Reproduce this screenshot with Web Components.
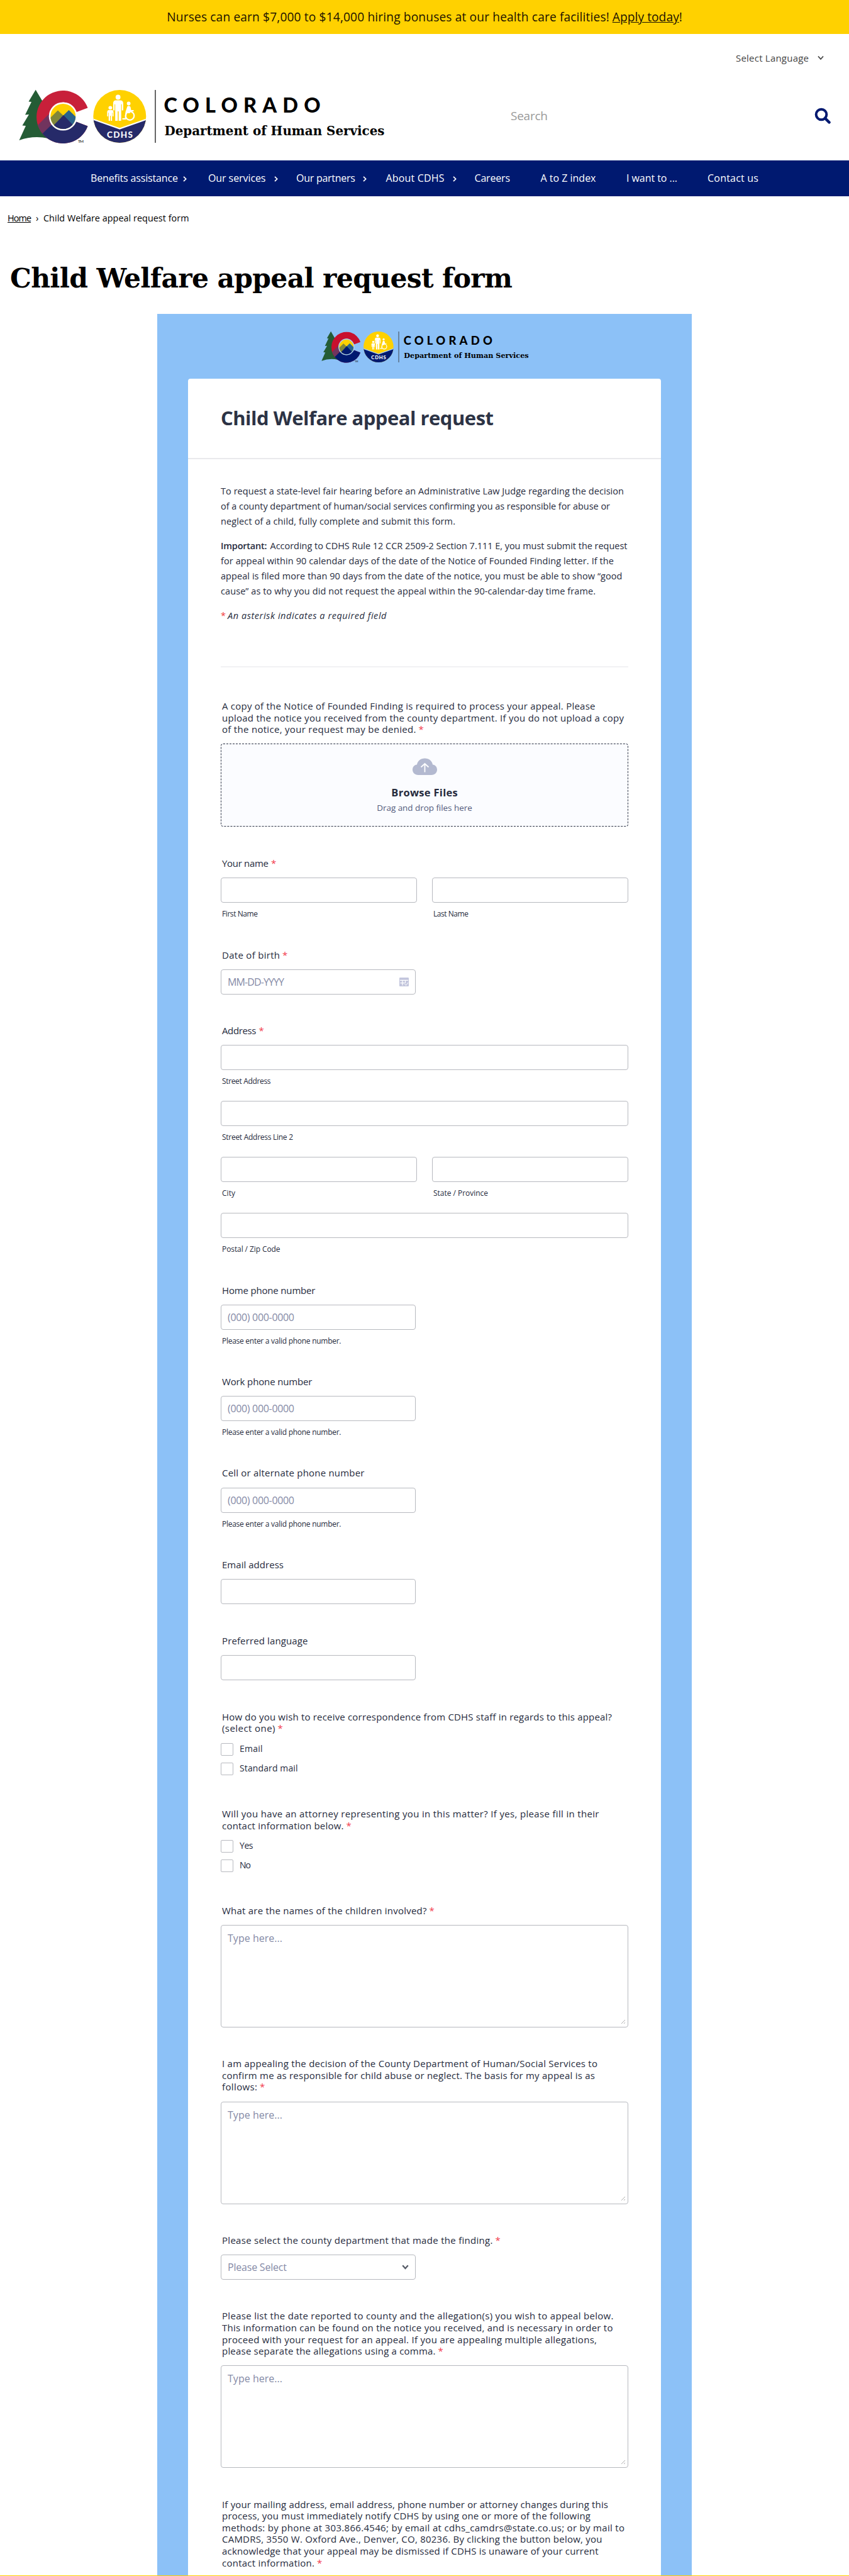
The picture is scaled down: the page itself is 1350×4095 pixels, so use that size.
<!DOCTYPE html>
<html lang="en">
<head>
<meta charset="utf-8">
<title>Child Welfare appeal request form</title>
<style>
html,body{margin:0;padding:0}
body{width:1350px;height:4095px;overflow:hidden;background:#fff;font-family:"Open Sans","Noto Sans",sans-serif;color:#000;display:flex;flex-direction:column}
main{flex:none}
.crumbs{display:flex;height:70px;line-height:70px;padding-left:12px;font-size:14.4px}
.crumbs .u{text-decoration:underline;text-underline-offset:1px}
h1{margin:0;height:117px;padding-left:16px;font:bold 42.5px/120px "DejaVu Serif",serif}
.foot{height:1px;flex:none;background:#ffd100}
.intro{display:flex;flex-direction:column;padding:38.5px 0 68px;font-size:14.5px;line-height:24px}
.intro p{margin:0 0 15px}
.intro p:last-child{margin:0}
.row{display:flex}
.pair{display:flex;justify-content:space-between}
.rule{height:2px;background:#f1f1f4;margin-bottom:52.5px}
</style>
</head>
<body>
<promo-banner><text-line w="703.5">Nurses can earn $7,000 to $14,000 hiring bonuses at our health care facilities!</text-line><text-line w="106" style="text-decoration:underline;margin-left:5px">Apply today</text-line><text-line w="5">!</text-line></promo-banner>
<site-header></site-header>
<nav-bar>
<nav-item style="width:187px" w="139" more="8">Benefits assistance</nav-item>
<nav-item style="width:140px" w="91.5" more="13.5">Our services</nav-item>
<nav-item style="width:142.5px" w="94" more="12">Our partners</nav-item>
<nav-item style="width:141px" w="93" more="13">About CDHS</nav-item>
<nav-item style="width:105px" w="56.5">Careers</nav-item>
<nav-item style="width:136.5px" w="88">A to Z index</nav-item>
<nav-item style="width:129px" w="81">I want to ...</nav-item>
<nav-item w="81">Contact us</nav-item>
</nav-bar>
<main>
<div class="crumbs"><text-line class="u" w="38">Home</text-line><text-line style="margin:0 7px" w="5">›</text-line><text-line w="231.5">Child Welfare appeal request form</text-line></div>
<h1><text-line w="799">Child Welfare appeal request form</text-line></h1>
<form-card>
<text-line slot="title" w="434">Child Welfare appeal request</text-line>
<div class="intro">
<p><text-line w="641">To request a state-level fair hearing before an Administrative Law Judge regarding the decision</text-line><text-line w="619">of a county department of human/social services confirming you as responsible for abuse or</text-line><text-line w="373">neglect of a child, fully complete and submit this form.</text-line></p>
<p><span class="row"><text-line w="73.5" style="font-weight:600;margin-right:5px">Important:</text-line><text-line w="568">According to CDHS Rule 12 CCR 2509-2 Section 7.111 E, you must submit the request</text-line></span><text-line w="625">for appeal within 90 calendar days of the date of the Notice of Founded Finding letter. If the</text-line><text-line w="638.5">appeal is filed more than 90 days from the date of the notice, you must be able to show “good</text-line><text-line w="596">cause” as to why you did not request the appeal within the 90-calendar-day time frame.</text-line></p>
<p class="row"><text-line w="6" style="color:#f23a3c;margin-right:5px">*</text-line><text-line w="252.5" style="font-style:italic">An asterisk indicates a required field</text-line></p>
</div>
<div class="rule"></div>

<form-field style="height:250px"><text-line slot="label" w="593.5">A copy of the Notice of Founded Finding is required to process your appeal. Please</text-line><text-line slot="label" w="639">upload the notice you received from the county department. If you do not upload a copy</text-line><text-line slot="label" w="308.5" req>of the notice, your request may be denied.</text-line><upload-box></upload-box></form-field>
<form-field style="height:145.5px"><text-line slot="label" w="74" req>Your name</text-line><div class="pair"><text-box style="width:312px" sub="First Name" sw="57"></text-box><text-box style="width:312px" sub="Last Name" sw="56"></text-box></div></form-field>
<form-field style="height:120px"><text-line slot="label" w="92" req>Date of birth</text-line><text-box style="width:310px" hint="MM-DD-YYYY" hw="90" icon="calendar"></text-box></form-field>
<form-field style="height:413px"><text-line slot="label" w="54.5" req>Address</text-line>
<text-box style="height:89px" sub="Street Address" sw="77.5"></text-box>
<text-box style="height:89px" sub="Street Address Line 2" sw="113"></text-box>
<div class="pair" style="height:89px"><text-box style="width:312px" sub="City" sw="21"></text-box><text-box style="width:312px" sub="State / Province" sw="87"></text-box></div>
<text-box sub="Postal / Zip Code" sw="92.5"></text-box></form-field>
<form-field style="height:145.3px"><text-line slot="label" w="148.5">Home phone number</text-line><text-box style="width:310px" hint="(000) 000-0000" hw="106" sub="Please enter a valid phone number." sw="189.5"></text-box></form-field>
<form-field style="height:145.6px"><text-line slot="label" w="143.5">Work phone number</text-line><text-box style="width:310px" hint="(000) 000-0000" hw="106" sub="Please enter a valid phone number." sw="189.5"></text-box></form-field>
<form-field style="height:145.4px"><text-line slot="label" w="226.5">Cell or alternate phone number</text-line><text-box style="width:310px" hint="(000) 000-0000" hw="106" sub="Please enter a valid phone number." sw="189.5"></text-box></form-field>
<form-field style="height:121px"><text-line slot="label" w="98">Email address</text-line><text-box style="width:310px"></text-box></form-field>
<form-field style="height:121px"><text-line slot="label" w="136.5">Preferred language</text-line><text-box style="width:310px"></text-box></form-field>
<form-field style="height:154.4px"><text-line slot="label" w="620">How do you wish to receive correspondence from CDHS staff in regards to this appeal?</text-line><text-line slot="label" w="84.5" req>(select one)</text-line><check-option><text-line w="36.5">Email</text-line></check-option><check-option><text-line w="92.5">Standard mail</text-line></check-option></form-field>
<form-field style="height:153.6px"><text-line slot="label" w="599.5">Will you have an attorney representing you in this matter? If yes, please fill in their</text-line><text-line slot="label" w="193.5" req>contact information below.</text-line><check-option><text-line w="21.5">Yes</text-line></check-option><check-option><text-line w="18">No</text-line></check-option></form-field>
<form-field style="height:243.5px"><text-line slot="label" w="325.5" req>What are the names of the children involved?</text-line><text-box area hint="Type here..." hw="87"></text-box></form-field>
<form-field style="height:280.5px"><text-line slot="label" w="597">I am appealing the decision of the County Department of Human/Social Services to</text-line><text-line slot="label" w="593">confirm me as responsible for child abuse or neglect. The basis for my appeal is as</text-line><text-line slot="label" w="56" req>follows:</text-line><text-box area hint="Type here..." hw="87"></text-box></form-field>
<form-field style="height:120.6px"><text-line slot="label" w="430.5" req>Please select the county department that made the finding.</text-line><text-box style="width:310px" hint="Please Select" hw="94" icon="chevron"></text-box></form-field>
<form-field style="height:299.3px"><text-line slot="label" w="622.5">Please list the date reported to county and the allegation(s) you wish to appeal below.</text-line><text-line slot="label" w="621.5">This information can be found on the notice you received, and is necessary in order to</text-line><text-line slot="label" w="596">proceed with your request for an appeal. If you are appealing multiple allegations,</text-line><text-line slot="label" w="339.5" req>please separate the allegations using a comma.</text-line><text-box area hint="Type here..." hw="87"></text-box></form-field>
<form-field><text-line slot="label" w="614">If your mailing address, email address, phone number or attorney changes during this</text-line><text-line slot="label" w="586">process, you must immediately notify CDHS by using one or more of the following</text-line><text-line slot="label" w="640">methods: by phone at 303.866.4546; by email at cdhs_camdrs@state.co.us; or by mail to</text-line><text-line slot="label" w="604.5">CAMDRS, 3550 W. Oxford Ave., Denver, CO, 80236. By clicking the button below, you</text-line><text-line slot="label" w="598.5">acknowledge that your appeal may be dismissed if CDHS is unaware of your current</text-line><text-line slot="label" w="147" req>contact information.</text-line></form-field>
</form-card>
</main>
<div class="foot"></div>
<script>
function define(name, html, setup) {
  customElements.define(name, class extends HTMLElement {
    connectedCallback() {
      if (this.shadowRoot) return;
      const root = this.attachShadow({mode: 'open'});
      root.innerHTML = typeof html === 'function' ? html(this) : html;
      if (setup) setup(this, root);
    }
  });
}

define('promo-banner', `<style>:host{display:flex;flex:none;height:54px;line-height:53px;background:#ffd100;justify-content:center;font-size:19.2px;color:#1c1200}</style><slot></slot>`);

// State and department marks with the wordmark.
define('agency-logo', `<style>
:host{display:block;flex:none}svg{display:block;width:100%;height:100%;overflow:visible}
.r{fill:var(--red,#c8203a)}.n{fill:var(--navy,#262a69)}.y{fill:#ffd100}.gap{fill:var(--gap,#fff)}
</style>
<svg viewBox="30 143 582 84" preserveAspectRatio="none">
<defs>
<clipPath id="c"><path d="M139.5 171.5A42 42 0 1 0 139.500 200.500L118.500 192.500A20 20 0 1 1 120.500 178.500Z"/></clipPath>
<clipPath id="d"><circle cx="100.300" cy="185" r="20"/></clipPath>
<clipPath id="e"><circle cx="190.300" cy="185" r="42"/></clipPath>
</defs>
<path fill="#245c35" d="M56.700 142.700L73 170L84 216L77 220Q53 215 30.500 223L41 200L35.500 199.500L46 182L40 182.500L50 162L45.500 161.500Z"/>
<g clip-path="url(#c)"><path class="r" d="M56 140h90v90H56z"/><path class="n" d="M67 212L100 181L150 185V230H60Z"/><path fill="#71345e" d="M54 205L77 182L90 190L68 212Z"/></g>
<circle class="gap" cx="100.300" cy="185" r="22.600"/>
<g clip-path="url(#d)"><path class="y" d="M78 163h45v45H78z"/><path fill="#80863a" d="M73 194L92 175.500L101 184L88 205Z"/><path fill="#2a648c" d="M97 187L109.500 175L128 193V205H100Z"/><path class="n" d="M76 209L101 183L127 210Z"/></g>
<text x="124" y="226.600" font-family="Lato,sans-serif" font-size="6.500" textLength="9">TM</text>
<g clip-path="url(#e)"><path class="y" d="M148 143h85v85h-85z"/><path class="n" d="M148 189.500L190.300 205L233 189.500V228H148Z"/><path d="M146 189L190.300 204.500L235 189" fill="none" style="stroke:var(--gap,#fff)" stroke-width="2.200"/></g>
<g fill="#fff"><circle cx="187.700" cy="154.500" r="3.900"/><path d="M183.500 159.500h8.500q4 .5 4 5v11h-2.300v-10l-1 .5v26h-4v-15h-1.500v15h-4v-26l-1-.5v10h-2.300v-11q0-4.500 3.600-5z"/>
<circle cx="175.400" cy="171.300" r="2.900"/><path d="M172.500 175h6q2 .3 2 3v7h-1.700v-6l-.6.300v12.700h-2.100v-8h-1.100v8h-2.200v-12.700l-.7-.3v6h-1.700v-7q0-2.700 2.100-3z"/>
<circle cx="204.600" cy="164.500" r="2.900"/><path d="M202.500 169q3-2 5 1l1 5h4v2h-5l-1 3h-5l-1 10h-6v-2h4l1-10z"/></g>
<circle cx="206.500" cy="184" r="6.800" fill="none" stroke="#fff" stroke-width="2.200"/>
<text x="170" y="218.600" fill="#fff" font-family="Lato,sans-serif" font-weight="900" font-size="13.500" textLength="41">CDHS</text>
<path d="M247 143v84" stroke="#333" stroke-width="1.500"/>
<text x="260.500" y="178.600" font-family="Lato,sans-serif" font-weight="900" font-size="32.500" textLength="249">COLORADO</text>
<text x="261.500" y="214.600" font-family="DejaVu Serif,serif" font-weight="bold" font-size="20.500" textLength="350" lengthAdjust="spacingAndGlyphs">Department of Human Services</text>
</svg>`);

define('site-header', `<style>
:host{display:flex;flex:none;height:201px;justify-content:space-between;align-items:flex-start}
agency-logo{width:582px;height:84px;margin:89px 0 0 30px}
.side{display:flex;flex-direction:column;width:538px;padding-top:28px}
.lang{display:flex;height:20px;line-height:20px;align-items:center;justify-content:flex-end;gap:14px;font-size:15px;color:#444;padding-right:40px}
.search{display:flex;height:30px;line-height:30px;margin-top:67px;align-items:center;justify-content:space-between;font-size:19px;color:#999;padding-right:29px}
svg{display:block}
</style>
<agency-logo></agency-logo>
<div class="side"><div class="lang"><text-line w="116">Select Language</text-line><svg width="10" height="8" viewBox="0 0 10 8" fill="none" stroke="#444" stroke-width="1.800"><path d="M1 1.500L5 6L9 1.500"/></svg></div>
<div class="search"><text-line w="59">Search</text-line><svg width="26" height="26" viewBox="0 0 26 26" fill="none" stroke="#001970" stroke-width="4"><circle cx="11" cy="11" r="8.300"/><path d="M17 17L23.500 23.500" stroke-width="4.500" stroke-linecap="round"/></svg></div></div>`);

define('nav-bar', `<style>:host{display:flex;flex:none;height:57px;line-height:55px;background:#001970;color:#fff;font-size:16px;padding-left:144px;box-sizing:border-box}</style><slot></slot>`);
define('nav-item', el => `<style>:host{display:flex;align-items:center}svg{margin-top:2px}</style><text-line w="${el.getAttribute('w')}">${el.textContent}</text-line>${el.hasAttribute('more') ? `<svg style="margin-left:${el.getAttribute('more')}px" width="6" height="9" viewBox="0 0 6 9" fill="none" stroke="#fff" stroke-width="1.700"><path d="M1 .8L4.700 4.500L1 8.200"/></svg>` : ''}`);

define('form-card', `<style>
:host{display:block;width:850px;height:3595px;margin:0 auto;background:#8cc1f7;box-sizing:border-box;padding:28px 49px 0;color:#262b3d;overflow:hidden}
agency-logo{width:330px;height:49px;margin:0 auto 26px;color:#000;--red:#c8102e;--navy:#001970;--gap:#a9cdf5;position:relative;left:1px}
.card{background:#fff;border-radius:4px 4px 0 0;height:3600px}
.head{height:128px;line-height:125px;box-sizing:border-box;padding-left:52px;border-bottom:2px solid #e9e9ec;font-size:31px;font-weight:700;color:#2c3345}
.body{padding:0 52px}
</style><agency-logo></agency-logo><div class="card"><div class="head"><slot name="title"></slot></div><div class="body"><slot></slot></div></div>`);

define('form-field', `<style>
:host{display:block}
.label{font-size:15px;line-height:18.6px;padding:0 0 13.6px 2px}
</style><div class="label"><slot name="label"></slot></div><slot></slot>`);

define('upload-box', `<style>
:host{display:flex;flex-direction:column;align-items:center;box-sizing:border-box;height:132px;border:1px dashed #2c3345;border-radius:4px;background:#fbfcff;padding-top:22px}
.b{font-size:16.5px;font-weight:700;line-height:24px;margin-top:15px}
.d{font-size:13.5px;line-height:20px;color:#535b7c;margin-top:2px}
</style><svg width="39" height="28" viewBox="0 0 39 28"><path fill="#b3b9d0" d="M9 27C3.500 27 0 23 0 18.500S3 11 7 10.500C8 4.500 13 .5 19.500 .5S31 4.500 32 10.500C36 11 39 14 39 18.500S35.500 27 30 27Z"/><path d="M19.500 22.500V9.500M13.500 14.500L19.500 9L25.500 14.500" fill="none" stroke="#fff" stroke-width="1.800"/></svg>
<text-line class="b" w="105.500">Browse Files</text-line><text-line class="d" w="151.500">Drag and drop files here</text-line>`);

const icons = {
  calendar: '<svg width="15" height="14" viewBox="0 0 15 14"><rect x="0" y="0" width="15" height="14" rx="1" fill="#c3c6dd"/><path d="M1 4.300h13M1.500 8.700h7M5 5v7.500M9.500 5v4" stroke="#fff" stroke-width="1.200"/><path d="M8.500 10L10.500 12.500L14 8" fill="none" stroke="#fff" stroke-width="1"/></svg>',
  chevron: '<svg width="11" height="8" viewBox="0 0 11 8" fill="none" stroke="#555b66" stroke-width="2.200"><path d="M1.200 1.200L5.500 6L9.800 1.200"/></svg>'
};

// Text box: single line by default, multi-line with the area attribute.
define('text-box', el => {
  const a = n => el.getAttribute(n);
  const area = el.hasAttribute('area');
  return `<style>
:host{display:block}
.box{box-sizing:border-box;display:flex;justify-content:space-between;align-items:center;height:${area ? 163 : 40}px;border:1px solid #b7b9bf;border-radius:4px;background:#fff;padding:0 10px;font-size:16px;line-height:38px;color:#858aa6}
.box.area{align-items:flex-start;padding:1px 3px 0 10px}
.grip{align-self:flex-end;margin-bottom:4px}
.sub{font-size:12px;line-height:16px;padding:10px 0 0 2px}
svg{display:block}
</style><div class="box${area ? ' area' : ''}">${a('hint') ? `<text-line w="${a('hw')}">${a('hint')}</text-line>` : ''}${a('icon') ? icons[a('icon')] : ''}${area ? '<svg class="grip" width="8" height="8" viewBox="0 0 8 8" stroke="#999" stroke-width=".8"><path d="M1 7L7 1M5 7L7 5"/></svg>' : ''}</div>${a('sub') ? `<div class="sub"><text-line w="${a('sw')}">${a('sub')}</text-line></div>` : ''}`;
});

define('check-option', `<style>
:host{display:flex;gap:10px;height:20px;margin-bottom:11px;font-size:14px;line-height:18px}
.c{box-sizing:border-box;width:20px;height:20px;border:1px solid #b7b9bf;border-radius:2px;background:#fff}
</style><div class="c"></div><slot></slot>`);

// A single line of text whose tracking is set so that it fills its measure (w).
// Registered last: the measure is taken with the font sizes of the hosts around it.
define('text-line', el => `<style>
:host{display:block;white-space:nowrap}
span{display:inline-block;text-decoration:inherit}
i{font-style:normal;color:#f23a4c;margin-left:4px;letter-spacing:0}
</style><span><slot></slot></span>${el.hasAttribute('req') ? '<i>*</i>' : ''}`, (el, root) => {
  const span = root.querySelector('span');
  const w = parseFloat(el.getAttribute('w'));
  const n = el.textContent.length;
  const natural = span.getBoundingClientRect().width;
  if (n > 1) span.style.letterSpacing = ((w - natural) / (n - 1)).toFixed(4) + 'px';
  span.style.width = w + 'px';
});
</script>
</body>
</html>
